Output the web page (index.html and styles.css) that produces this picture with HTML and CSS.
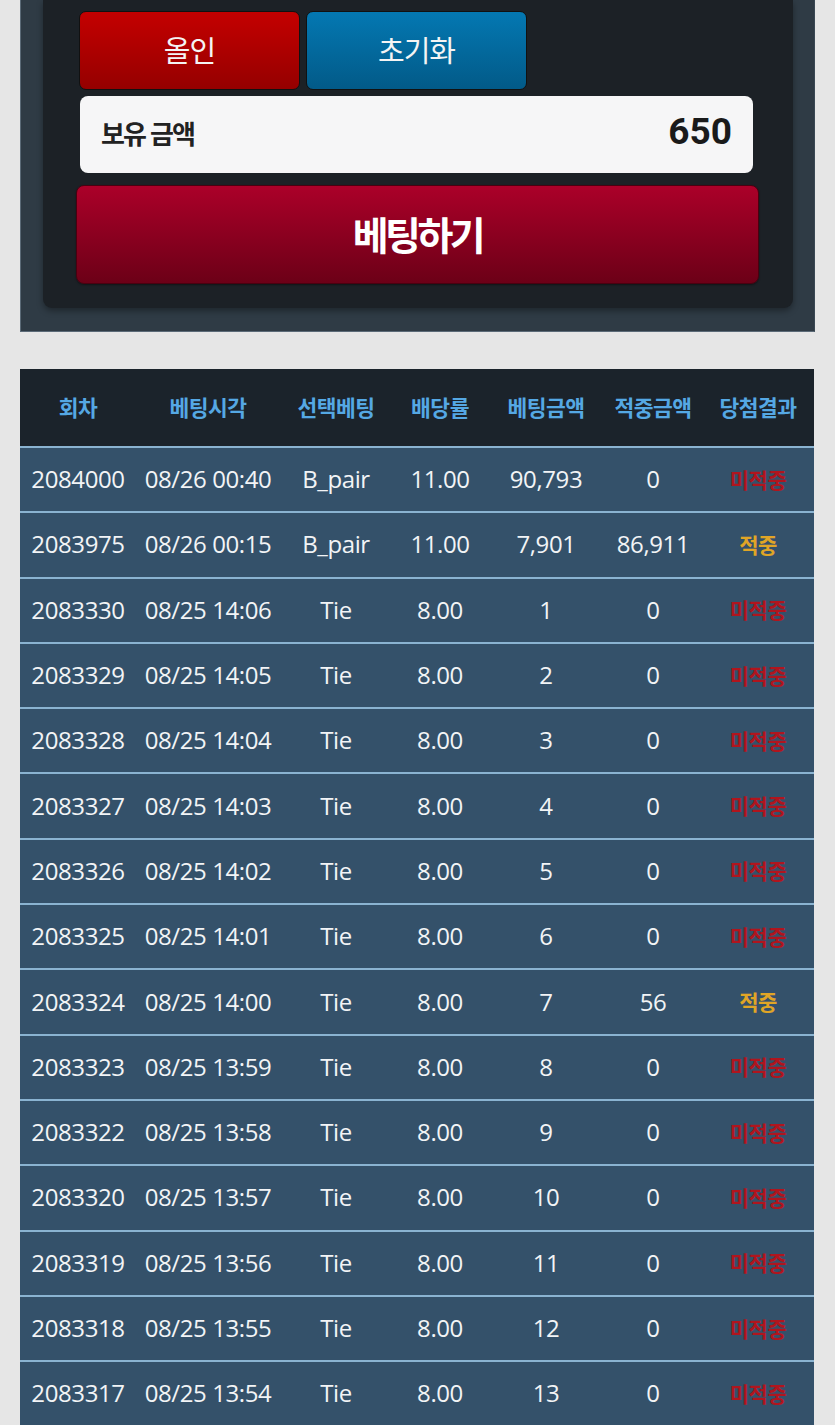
FILE: index.html
```html
<!DOCTYPE html>
<html lang="ko">
<head>
<meta charset="utf-8">
<title>베팅</title>
<link rel="stylesheet" href="styles.css">
</head>
<body>
<div class="page">
  <section class="bet-panel">
    <div class="bet-inner">
      <div class="quick-row">
        <button class="qbtn qbtn-red">올인</button>
        <button class="qbtn qbtn-blue">초기화</button>
      </div>
      <div class="balance">
        <span class="balance-label">보유 금액</span>
        <span class="balance-value">650</span>
      </div>
      <button class="bet-btn">베팅하기</button>
    </div>
  </section>

  <table class="history">
    <colgroup>
      <col class="c1"><col class="c2"><col class="c3"><col class="c4"><col class="c5"><col class="c6"><col class="c7">
    </colgroup>
    <thead>
      <tr><th>회차</th><th>베팅시각</th><th>선택베팅</th><th>배당률</th><th>베팅금액</th><th>적중금액</th><th>당첨결과</th></tr>
    </thead>
    <tbody>
      <tr><td>2084000</td><td>08/26 00:40</td><td>B_pair</td><td>11.00</td><td>90,793</td><td>0</td><td class="lose">미적중</td></tr>
      <tr><td>2083975</td><td>08/26 00:15</td><td>B_pair</td><td>11.00</td><td>7,901</td><td>86,911</td><td class="win">적중</td></tr>
      <tr><td>2083330</td><td>08/25 14:06</td><td>Tie</td><td>8.00</td><td>1</td><td>0</td><td class="lose">미적중</td></tr>
      <tr><td>2083329</td><td>08/25 14:05</td><td>Tie</td><td>8.00</td><td>2</td><td>0</td><td class="lose">미적중</td></tr>
      <tr><td>2083328</td><td>08/25 14:04</td><td>Tie</td><td>8.00</td><td>3</td><td>0</td><td class="lose">미적중</td></tr>
      <tr><td>2083327</td><td>08/25 14:03</td><td>Tie</td><td>8.00</td><td>4</td><td>0</td><td class="lose">미적중</td></tr>
      <tr><td>2083326</td><td>08/25 14:02</td><td>Tie</td><td>8.00</td><td>5</td><td>0</td><td class="lose">미적중</td></tr>
      <tr><td>2083325</td><td>08/25 14:01</td><td>Tie</td><td>8.00</td><td>6</td><td>0</td><td class="lose">미적중</td></tr>
      <tr><td>2083324</td><td>08/25 14:00</td><td>Tie</td><td>8.00</td><td>7</td><td>56</td><td class="win">적중</td></tr>
      <tr><td>2083323</td><td>08/25 13:59</td><td>Tie</td><td>8.00</td><td>8</td><td>0</td><td class="lose">미적중</td></tr>
      <tr><td>2083322</td><td>08/25 13:58</td><td>Tie</td><td>8.00</td><td>9</td><td>0</td><td class="lose">미적중</td></tr>
      <tr><td>2083320</td><td>08/25 13:57</td><td>Tie</td><td>8.00</td><td>10</td><td>0</td><td class="lose">미적중</td></tr>
      <tr><td>2083319</td><td>08/25 13:56</td><td>Tie</td><td>8.00</td><td>11</td><td>0</td><td class="lose">미적중</td></tr>
      <tr><td>2083318</td><td>08/25 13:55</td><td>Tie</td><td>8.00</td><td>12</td><td>0</td><td class="lose">미적중</td></tr>
      <tr><td>2083317</td><td>08/25 13:54</td><td>Tie</td><td>8.00</td><td>13</td><td>0</td><td class="lose">미적중</td></tr>
    </tbody>
  </table>
</div>
</body>
</html>
```

FILE: styles.css
```css
html, body {
  margin: 0;
  padding: 0;
  background: #e6e6e6;
  font-family: "Open Sans", "Noto Sans CJK KR", sans-serif;
}

.page {
  padding: 0 20px 40px 20px;
}

.bet-panel {
  background: #2f3b45;
  border-left: 1px solid #5b6a77;
  border-right: 1px solid #3a4853;
  border-bottom: 1px solid #5b6a77;
  padding: 0 21px 23px 22px;
}

.bet-inner {
  background: #1c2126;
  border-radius: 0 0 9px 9px;
  box-shadow: 0 3px 6px rgba(0, 0, 0, 0.35);
  padding: 11px 40px 24px 36px;
  display: flex;
  flex-direction: column;
}

.quick-row {
  display: flex;
  gap: 6px;
}

.qbtn {
  width: 221px;
  height: 79px;
  border: 1px solid #111;
  border-radius: 7px;
  color: #f4f4f4;
  font-family: "Noto Sans CJK KR", sans-serif;
  font-size: 29px;
  font-weight: 400;
  letter-spacing: -1px;
  padding: 0 0 4px 0;
}

.qbtn-red {
  background: linear-gradient(#c40000, #950000);
}

.qbtn-blue {
  background: linear-gradient(#0478b2, #025a88);
}

.balance {
  margin-top: 6px;
  margin-left: 1px;
  height: 77px;
  background: #f6f6f7;
  border-radius: 8px;
  display: flex;
  align-items: center;
  justify-content: space-between;
  padding: 0 21px 0 21px;
  box-sizing: border-box;
}

.balance-label {
  font-family: "Noto Sans CJK KR", sans-serif;
  font-weight: 700;
  font-size: 26px;
  color: #222;
  letter-spacing: -2px;
  margin-top: -4px;
}

.balance-value {
  font-family: Roboto, "Noto Sans", sans-serif;
  font-weight: 700;
  font-size: 37px;
  color: #1a1a1a;
  margin-top: -6px;
}

.bet-btn {
  margin: 12px -6px 0 -3px;
  height: 99px;
  border: 1px solid #4a0010;
  border-radius: 8px;
  background: linear-gradient(#ab0029, #6c0017);
  color: #fff;
  font-family: "Noto Sans CJK KR", sans-serif;
  font-weight: 700;
  font-size: 39px;
  letter-spacing: -3.5px;
  padding: 0 0 4px 0;
  box-shadow: 0 1px 2px rgba(0, 0, 0, 0.4);
}

.history {
  margin-top: 37px;
  width: 794px;
  border-collapse: collapse;
  table-layout: fixed;
}

.c1 { width: 116px; }
.c2 { width: 144px; }
.c3 { width: 112px; }
.c4 { width: 96px; }
.c5 { width: 116px; }
.c6 { width: 98px; }
.c7 { width: 112px; }

.history thead th {
  background: #1b232b;
  color: #55a8e4;
  font-family: "Noto Sans CJK KR", sans-serif;
  font-weight: 700;
  font-size: 21.5px;
  height: 75px;
  padding: 0 0 2px 0;
  text-align: center;
  white-space: nowrap;
  letter-spacing: -0.5px;
}

.history tbody td {
  background: #34516a;
  border-top: 2px solid #8ab3d1;
  color: #f2f4f6;
  font-size: 24px;
  text-align: center;
  height: 61.3px;
  padding: 0 0 2px 0;
  white-space: nowrap;
  letter-spacing: -0.4px;
}

.history tbody td.lose {
  color: #b0151e;
  font-family: "Noto Sans CJK KR", sans-serif;
  font-weight: 700;
  font-size: 21px;
  letter-spacing: -0.5px;
}

.history tbody td.win {
  color: #e0a526;
  font-family: "Noto Sans CJK KR", sans-serif;
  font-weight: 700;
  font-size: 21px;
  letter-spacing: -0.5px;
}
```
